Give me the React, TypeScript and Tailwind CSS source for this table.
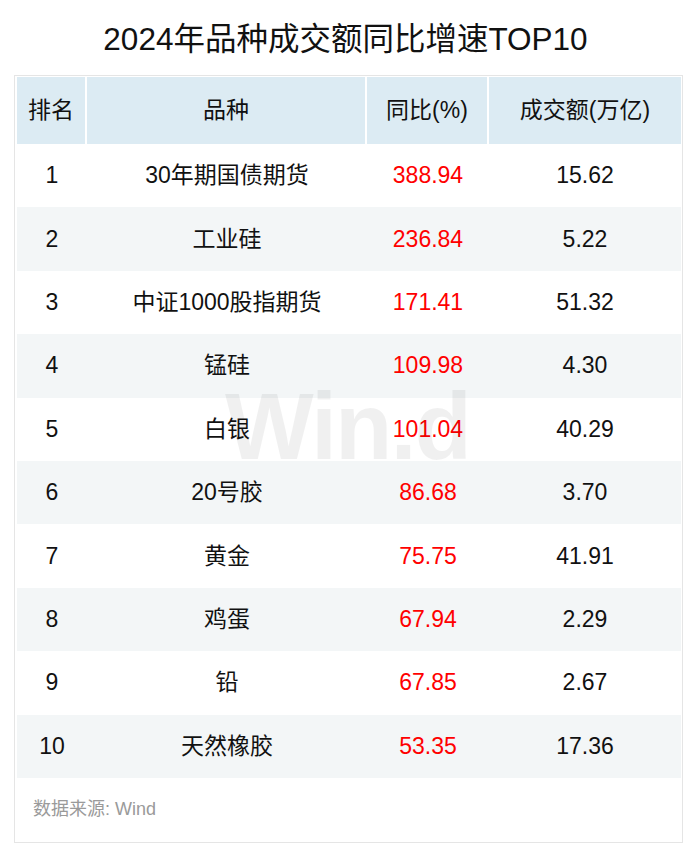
const ROWS: { rank: number; name: string; yoy: string; amount: string }[] = [
  { rank: 1, name: '30年期国债期货', yoy: '388.94', amount: '15.62' },
  { rank: 2, name: '工业硅', yoy: '236.84', amount: '5.22' },
  { rank: 3, name: '中证1000股指期货', yoy: '171.41', amount: '51.32' },
  { rank: 4, name: '锰硅', yoy: '109.98', amount: '4.30' },
  { rank: 5, name: '白银', yoy: '101.04', amount: '40.29' },
  { rank: 6, name: '20号胶', yoy: '86.68', amount: '3.70' },
  { rank: 7, name: '黄金', yoy: '75.75', amount: '41.91' },
  { rank: 8, name: '鸡蛋', yoy: '67.94', amount: '2.29' },
  { rank: 9, name: '铅', yoy: '67.85', amount: '2.67' },
  { rank: 10, name: '天然橡胶', yoy: '53.35', amount: '17.36' },
];

const FONT = "font-['Liberation_Sans','Noto_Sans_CJK_SC',sans-serif]";

export default function App() {
  return (
    <div className={`w-[691px] h-[852px] bg-white text-[#111] ${FONT}`}>
      {/* Title */}
      <div className="h-[75px] flex items-center justify-center pt-[4px]">
        <h1 className="text-[31.5px] leading-none text-[#111] whitespace-nowrap">2024年品种成交额同比增速TOP10</h1>
      </div>

      {/* Card */}
      <div className="relative ml-[14px] w-[669px] h-[768px] border border-[#e5e5e5] pl-[2px] pr-[1px] pt-[1px]">
        {/* Header */}
        <div className="flex h-[67px] text-[23px] leading-none">
          <div className="w-[70px] flex items-center justify-center bg-[#dcebf3] border-r-2 border-white">排名</div>
          <div className="w-[280px] flex items-center justify-center bg-[#dcebf3] border-r-2 border-white">品种</div>
          <div className="w-[122px] flex items-center justify-center bg-[#dcebf3] border-r-2 border-white">同比(%)</div>
          <div className="w-[192px] flex items-center justify-center bg-[#dcebf3]">成交额(万亿)</div>
        </div>

        {/* Rows */}
        {ROWS.map((r, i) => (
          <div
            key={r.rank}
            className={`flex h-[63.4px] text-[23px] leading-none ${i % 2 === 1 ? 'bg-[#f3f6f7]' : 'bg-white'}`}
          >
            <div className="w-[70px] flex items-center justify-center">{r.rank}</div>
            <div className="w-[280px] flex items-center justify-center whitespace-nowrap">{r.name}</div>
            <div className="w-[122px] flex items-center justify-center text-[#ff0000]">{r.yoy}</div>
            <div className="w-[192px] flex items-center justify-center">{r.amount}</div>
          </div>
        ))}

        {/* Source */}
        <div className="h-[64px] flex items-center pl-[16px] text-[18px] text-[#9a9a9a]">数据来源: Wind</div>

        {/* Watermark */}
        <div className="pointer-events-none absolute left-[210px] top-[304px] text-[94px] font-bold leading-none tracking-[-2px] text-black/[0.06] select-none">
          Win.d
        </div>
      </div>
    </div>
  );
}
